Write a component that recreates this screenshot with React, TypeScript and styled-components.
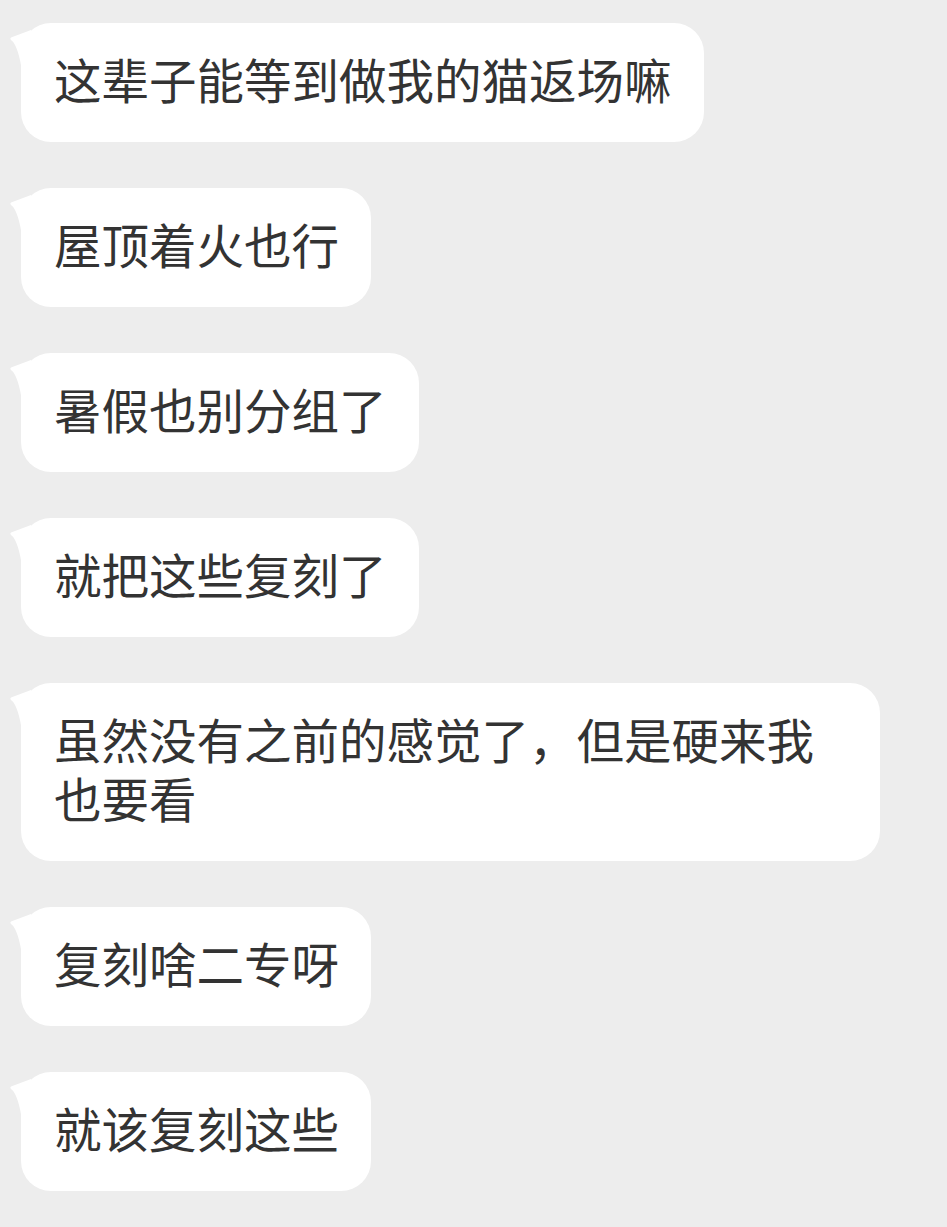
import styled, { createGlobalStyle } from "styled-components";

const GlobalStyle = createGlobalStyle`
  html, body {
    margin: 0;
    padding: 0;
    background: #ededed;
  }
  body {
    font-family: "Noto Sans CJK SC", "Noto Sans", sans-serif;
  }
`;

const messages = [
  "这辈子能等到做我的猫返场嘛",
  "屋顶着火也行",
  "暑假也别分组了",
  "就把这些复刻了",
  "虽然没有之前的感觉了，但是硬来我也要看",
  "复刻啥二专呀",
  "就该复刻这些",
];

const Page = styled.div`
  min-height: 1227px;
  box-sizing: border-box;
  padding: 23px 0 0 21px;
  display: flex;
  flex-direction: column;
  align-items: flex-start;
  gap: 46px;
`;

const Bubble = styled.div`
  position: relative;
  max-width: 859px;
  box-sizing: border-box;
  padding: 26px 32px 34px 33px;
  background: #ffffff;
  border-radius: 30px;
  color: #333333;
  font-size: 47.5px;
  line-height: 59px;
`;

const Tail = styled.svg`
  position: absolute;
  left: -12px;
  top: 5px;
  width: 24px;
  height: 40px;
`;

function Message({ text }: { text: string }) {
  return (
    <Bubble>
      <Tail viewBox="0 0 24 40">
        <path d="M22 2 L2 9.5 Q0.5 10.5 2 12 Q8 16 12 37 L22 37 Z" fill="#ffffff" />
      </Tail>
      {text}
    </Bubble>
  );
}

export default function App() {
  return (
    <>
      <GlobalStyle />
      <Page>
        {messages.map((m, i) => (
          <Message key={i} text={m} />
        ))}
      </Page>
    </>
  );
}
